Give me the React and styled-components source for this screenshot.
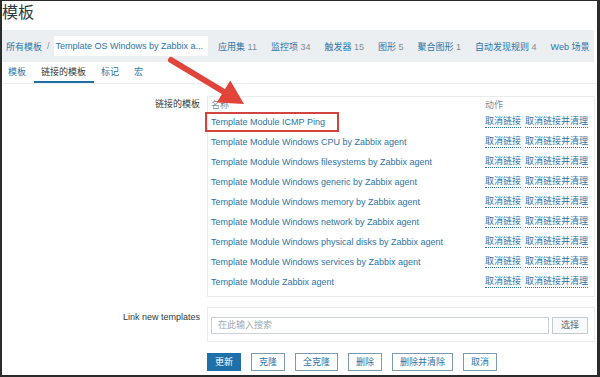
import React from "react";
import styled, { createGlobalStyle } from "styled-components";

const Global = createGlobalStyle`
  html, body { margin: 0; padding: 0; }
  body { background: #2b2b2b; font-family: "Liberation Sans", "Noto Sans CJK SC", sans-serif; }
  * { box-sizing: border-box; }
`;

const BLUE = "#2a75a8";
const DARK = "#2e3a40";
const GRAY = "#7d8d96";

const Frame = styled.div`
  width: 600px;
  height: 377px;
  padding: 1px 3px 2px 2px;
  background: #2b2b2b;
  position: relative;
  overflow: hidden;
`;

const Page = styled.div`
  background: #fff;
  height: 100%;
  display: flex;
  flex-direction: column;
`;

const Title = styled.h1`
  margin: 0;
  height: 29px;
  font-size: 16px;
  font-weight: normal;
  color: ${DARK};
  line-height: 24px;
  padding-left: 0;
`;

const NavBar = styled.div`
  height: 32px;
  margin-right: 3px;
  background: #eceff1;
  display: flex;
  align-items: center;
  padding-left: 4px;
  font-size: 9px;
  white-space: nowrap;
`;

const Crumb = styled.span`
  color: ${BLUE};
`;

const Sep = styled.span`
  color: ${GRAY};
  margin: 0 4px 0 5px;
`;

const CurrentCrumb = styled.span`
  background: #fff;
  color: ${BLUE};
  height: 20px;
  line-height: 20px;
  padding: 0 5px 0 2px;
  margin-right: 10px;
`;

const NavItems = styled.div`
  display: flex;
  gap: 14px;
`;

const NavItem = styled.span`
  color: ${BLUE};
`;

const Count = styled.span`
  color: ${GRAY};
  margin-left: 2.5px;
`;

const Tabs = styled.div`
  height: 22px;
  display: flex;
  align-items: stretch;
  border-bottom: 1px solid #eceff1;
  font-size: 9px;
`;

const Tab = styled.span`
  display: flex;
  align-items: center;
  padding: 0 7.5px;
  color: ${(p) => (p.$active ? DARK : BLUE)};
  border-bottom: 2px solid ${(p) => (p.$active ? "#1f70a8" : "transparent")};
  &:first-child { padding-left: 6px; }
`;

const Form = styled.div`
  display: grid;
  grid-template-columns: 198px 1fr;
  column-gap: 7px;
  row-gap: 10px;
  padding-top: 12px;
  padding-right: 2px;
  font-size: 9px;
`;

const Label = styled.div`
  text-align: right;
  color: ${DARK};
  padding-top: ${(p) => p.$top || 0}px;
  line-height: 12px;
`;

const TableBox = styled.div`
  border: 1px solid #e9ecee;
  padding: 0 0 4px 3px;
`;

const Row = styled.div`
  display: grid;
  grid-template-columns: 274px 1fr;
  height: ${(p) => (p.$head ? 15 : 20)}px;
  align-items: center;
  color: ${(p) => (p.$head ? GRAY : BLUE)};
`;

const NameLink = styled.span`
  position: relative;
  color: #2d74a6;
  &::after {
    content: ${(p) => (p.$marked ? "''" : "none")};
    position: absolute;
    left: -6px;
    right: -14px;
    top: -5px;
    bottom: -5px;
    border: 2px solid #d2443f;
  }
`;

const Actions = styled.div`
  display: flex;
  gap: 4px;
`;

const ActionLink = styled.span`
  color: ${BLUE};
  border-bottom: 1px dotted ${BLUE};
  line-height: 11px;
`;

const LinkBox = styled.div`
  border: 1px solid #e9ecee;
  padding: 9px 6px 7px 3px;
  display: flex;
  gap: 3px;
`;

const SearchInput = styled.div`
  flex: 1;
  height: 17px;
  border: 1px solid #cdd2d6;
  color: #a0a8ae;
  padding-left: 6px;
  line-height: 15px;
`;

const SelectButton = styled.span`
  width: 36px;
  height: 17px;
  border: 1px solid #c6cbcf;
  background: #f8f9fa;
  color: #606a70;
  text-align: center;
  line-height: 15px;
`;

const Buttons = styled.div`
  grid-column: 2;
  display: flex;
  gap: 10px;
  padding-top: 1px;
`;

const Button = styled.span`
  height: 18px;
  line-height: 16px;
  padding: 0 7px;
  border: 1px solid ${(p) => (p.$primary ? "#1f70a8" : "#7c9bb1")};
  background: ${(p) => (p.$primary ? "#1f70a8" : "#fff")};
  color: ${(p) => (p.$primary ? "#fff" : BLUE)};
`;

const Overlay = styled.svg`
  position: absolute;
  left: 0;
  top: 0;
  pointer-events: none;
`;

const templates = [
  "Template Module ICMP Ping",
  "Template Module Windows CPU by Zabbix agent",
  "Template Module Windows filesystems by Zabbix agent",
  "Template Module Windows generic by Zabbix agent",
  "Template Module Windows memory by Zabbix agent",
  "Template Module Windows network by Zabbix agent",
  "Template Module Windows physical disks by Zabbix agent",
  "Template Module Windows services by Zabbix agent",
  "Template Module Zabbix agent",
];

const navItems = [
  ["应用集", "11"],
  ["监控项", "34"],
  ["触发器", "15"],
  ["图形", "5"],
  ["聚合图形", "1"],
  ["自动发现规则", "4"],
  ["Web 场景", ""],
];

export default function App() {
  return (
    <Frame>
      <Global />
      <Page>
        <Title>模板</Title>
        <NavBar>
          <Crumb>所有模板</Crumb>
          <Sep>/</Sep>
          <CurrentCrumb>Template OS Windows by Zabbix a...</CurrentCrumb>
          <NavItems>
            {navItems.map(([n, c]) => (
              <NavItem key={n}>
                {n}
                {c && <Count>{c}</Count>}
              </NavItem>
            ))}
          </NavItems>
        </NavBar>
        <Tabs>
          <Tab>模板</Tab>
          <Tab $active>链接的模板</Tab>
          <Tab>标记</Tab>
          <Tab>宏</Tab>
        </Tabs>
        <Form>
          <Label $top={2}>链接的模板</Label>
          <TableBox>
            <Row $head>
              <span>名称</span>
              <span>动作</span>
            </Row>
            {templates.map((t, i) => (
              <Row key={t}>
                <span>
                  <NameLink $marked={i === 0}>{t}</NameLink>
                </span>
                <Actions>
                  <ActionLink>取消链接</ActionLink>
                  <ActionLink>取消链接并清理</ActionLink>
                </Actions>
              </Row>
            ))}
          </TableBox>
          <Label $top={4}>Link new templates</Label>
          <LinkBox>
            <SearchInput>在此输入搜索</SearchInput>
            <SelectButton>选择</SelectButton>
          </LinkBox>
          <Buttons>
            <Button $primary>更新</Button>
            <Button>克隆</Button>
            <Button>全克隆</Button>
            <Button>删除</Button>
            <Button>删除并清除</Button>
            <Button>取消</Button>
          </Buttons>
        </Form>
      </Page>
      <Overlay width="600" height="377" viewBox="0 0 600 377">
        <line x1="171" y1="60" x2="225" y2="92.5" stroke="#e0443a" strokeWidth="6" strokeLinecap="round" />
        <polygon points="244,104 216.7,102.6 230.3,80.4" fill="#e0443a" />
      </Overlay>
    </Frame>
  );
}
